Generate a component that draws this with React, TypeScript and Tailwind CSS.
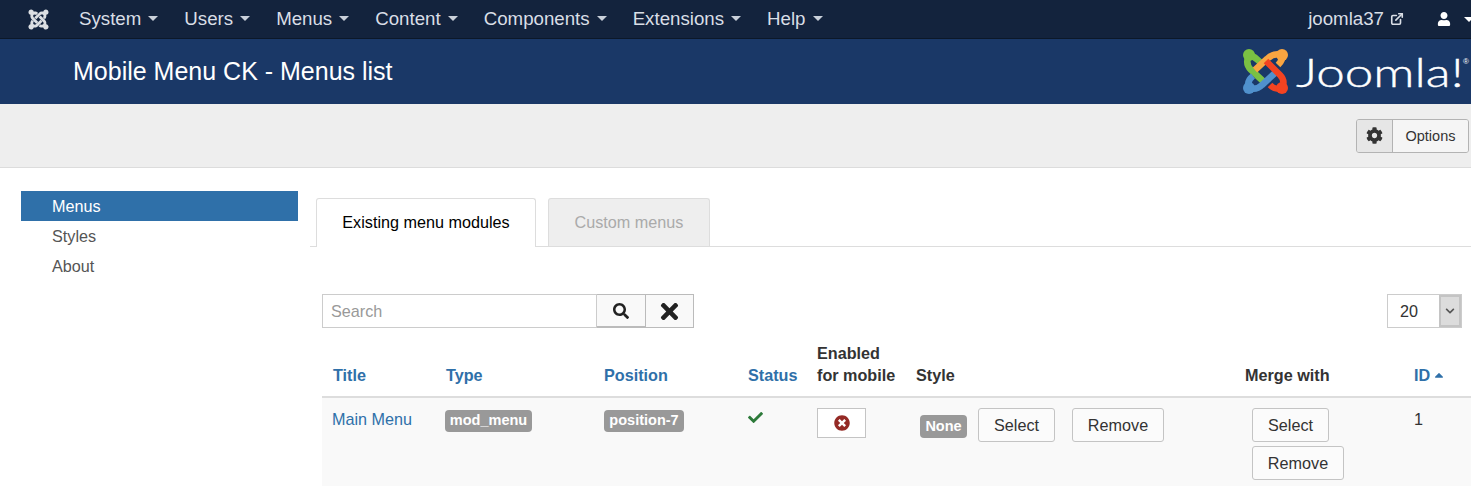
import { FaCheck, FaCog, FaJoomla, FaSearch, FaTimes, FaTimesCircle, FaUser } from "react-icons/fa";
import { FaCaretUp, FaChevronDown } from "react-icons/fa";
import { LuExternalLink } from "react-icons/lu";

const navItems = ["System", "Users", "Menus", "Content", "Components", "Extensions", "Help"];
const sideItems = ["Menus", "Styles", "About"];

function Caret() {
  return <span className="ml-[7px] inline-block h-0 w-0 border-x-[5px] border-t-[5px] border-x-transparent border-t-[#c9d0da] align-middle" />;
}

function JoomlaMark() {
  return (
    <svg viewBox="0 0 46 46" className="h-[46px] w-[46px]" fill="none" strokeWidth="6.5">
      <path d="M17 13 C13 9 11 7 6 6 C3 12 4 17 8 21 L21 33" stroke="#7ac143" />
      <circle cx="6" cy="6" r="6" fill="#7ac143" />
      <path d="M39 6 C32 4 28 6 24 10 L12 21" stroke="#f9a541" />
      <path d="M39 6 C40 10 38 13 35 16" stroke="#f9a541" />
      <circle cx="39" cy="6" r="6" fill="#f9a541" />
      <path d="M6 39 C12 41 16 39 19 36 L33 23" stroke="#5091cd" />
      <path d="M6 39 C4 34 6 30 10 27" stroke="#5091cd" />
      <circle cx="6" cy="39" r="6" fill="#5091cd" />
      <path d="M39 39 C42 33 40 29 37 26 L23 12" stroke="#f44321" />
      <path d="M39 39 C34 41 31 40 27 36" stroke="#f44321" />
      <circle cx="39" cy="39" r="6" fill="#f44321" />
    </svg>
  );
}

function Badge({ children, className }: { children: string; className: string }) {
  return (
    <span className={`inline-flex items-center justify-center rounded-[4px] bg-[#999] text-[14.5px] font-bold text-white ${className}`}>
      {children}
    </span>
  );
}

function Btn({ children, className }: { children: string; className: string }) {
  return (
    <button className={`h-[34px] rounded-[3px] border border-[#c4c4c4] bg-[#fbfbfb] text-[16.2px] text-[#333] ${className}`}>
      {children}
    </button>
  );
}

export default function App() {
  return (
    <div className="h-[486px] w-[1471px] overflow-hidden bg-white font-['Liberation_Sans',sans-serif] text-[16.2px] text-[#333]">
      <nav className="flex h-[39px] items-center border-b border-[#0c1829] bg-[#13233d] text-[18.7px] text-[#d9dee6]">
        <FaJoomla className="ml-[27px] mr-[29px] h-[23px] w-[23px] text-[#dcdfe3]" />
        <div className="flex gap-[26px]">
          {navItems.map((item) => (
            <span key={item} className="flex items-center">
              {item}
              <Caret />
            </span>
          ))}
        </div>
        <span className="ml-auto flex items-center">
          joomla37
          <LuExternalLink className="ml-[6px] h-[14px] w-[14px]" strokeWidth={2.8} />
        </span>
        <FaUser className="ml-[33px] h-[14px] w-[14px] text-white" />
        <span className="ml-[13px] mr-[-3px] h-0 w-0 border-x-[5px] border-t-[5px] border-x-transparent border-t-white" />
      </nav>

      <header className="flex h-[65px] items-center justify-between bg-[#1a3867] pl-[73px] text-white">
        <h1 className="text-[25px]">Mobile Menu CK - Menus list</h1>
        <div className="flex items-center pr-[2px]">
          <JoomlaMark />
          <span className="ml-[7px] w-[167px] origin-left scale-x-[1.28] font-['Lato',sans-serif] text-[40px] font-light leading-none [-webkit-text-stroke:0.4px_white]">Joomla!</span>
          <span className="mb-[20px] text-[8px]">®</span>
        </div>
      </header>

      <div className="flex h-[64px] items-center justify-end border-b border-[#dcdcdc] bg-[#eee] pr-[2px]">
        <div className="flex h-[34px] overflow-hidden rounded-[3px] border border-[#b3b3b3] text-[14.5px]">
          <span className="flex w-[36px] items-center justify-center border-r border-[#b3b3b3] bg-[#e6e6e6]">
            <FaCog className="h-[17px] w-[17px] text-[#333]" />
          </span>
          <span className="flex w-[75px] items-center justify-center bg-[#f5f5f5] pt-[2px]">Options</span>
        </div>
      </div>

      <div className="flex">
        <aside className="ml-[21px] mt-[23px] w-[277px]">
          {sideItems.map((item, i) => (
            <div key={item} className={`flex h-[30px] items-center pl-[31px] ${i === 0 ? "bg-[#2f70a9] text-white" : "text-[#555]"}`}>
              {item}
            </div>
          ))}
        </aside>

        <main className="ml-[12px] flex-1">
          <div className="mt-[30px] flex h-[49px] gap-[12px] border-b border-[#ddd] pl-[6px]">
            <div className="flex h-[49px] w-[220px] items-center justify-center rounded-t-[3px] border border-b-0 border-[#ddd] bg-white pb-[2px] text-black">
              Existing menu modules
            </div>
            <div className="flex h-[48px] w-[162px] items-center justify-center rounded-t-[3px] border border-b-0 border-[#ddd] bg-[#eee] pb-[1px] text-[#aaa]">
              Custom menus
            </div>
          </div>

          <div className="ml-[12px] mt-[47px] flex h-[34px] items-stretch justify-between pr-[9px]">
            <div className="flex">
              <div className="flex w-[275px] items-center border border-[#ccc] bg-white pl-[8px] text-[#999]">Search</div>
              <span className="flex w-[49px] items-center justify-center border border-b-2 border-l-0 border-[#bbb] bg-[#f9f9f9]">
                <FaSearch className="h-[16px] w-[16px] text-[#222]" />
              </span>
              <span className="flex w-[48px] items-center justify-center border border-l-0 border-[#bbb] bg-[#f9f9f9]">
                <FaTimes className="h-[25px] w-[25px] text-[#222]" />
              </span>
            </div>
            <div className="flex w-[75px] border border-[#ccc]">
              <span className="flex flex-1 items-center pl-[12px]">20</span>
              <span className="flex w-[22px] items-center justify-center border-2 border-[#c4c4c4] bg-[#dcdcdc]">
                <FaChevronDown className="h-[10px] w-[10px] text-[#555]" />
              </span>
            </div>
          </div>

          <table className="ml-[12px] mt-[14px] w-[1149px] table-fixed border-collapse">
            <colgroup>
              <col className="w-[114px]" />
              <col className="w-[158px]" />
              <col className="w-[144px]" />
              <col className="w-[69px]" />
              <col className="w-[99px]" />
              <col className="w-[329px]" />
              <col className="w-[169px]" />
              <col className="w-[67px]" />
            </colgroup>
            <thead>
              <tr className="border-b-2 border-[#ddd] text-left align-bottom font-bold leading-[22px]">
                <th className="pb-[10px] pl-[11px] text-[#2f70a9]">Title</th>
                <th className="pb-[10px] pl-[10px] text-[#2f70a9]">Type</th>
                <th className="pb-[10px] pl-[10px] text-[#2f70a9]">Position</th>
                <th className="pb-[10px] pl-[10px] text-[#2f70a9]">Status</th>
                <th className="pb-[10px] pl-[10px]">Enabled<br />for mobile</th>
                <th className="pb-[10px] pl-[10px]">Style</th>
                <th className="pb-[10px] pl-[10px]">Merge with</th>
                <th className="pb-[10px] pl-[10px] text-[#2f70a9]">
                  ID
                  <FaCaretUp className="mb-[3px] ml-[2px] inline h-[14px] w-[14px]" />
                </th>
              </tr>
            </thead>
            <tbody>
              <tr className="h-[90px] bg-[#f9f9f9] align-top">
                <td className="pl-[10px] pt-[9px] text-[#2f70a9]">Main Menu</td>
                <td className="pl-[9px] pt-[9px]">
                  <Badge className="h-[22px] w-[87px]">mod_menu</Badge>
                </td>
                <td className="pl-[10px] pt-[9px]">
                  <Badge className="h-[22px] w-[80px]">position-7</Badge>
                </td>
                <td className="pl-[9px] pt-[12px]">
                  <FaCheck className="h-[15px] w-[17px] text-[#2d7a3a]" />
                </td>
                <td className="pl-[10px] pt-[10px]">
                  <span className="flex h-[30px] w-[49px] items-center justify-center border border-[#c4c4c4] bg-white">
                    <FaTimesCircle className="h-[16px] w-[16px] text-[#942a25]" />
                  </span>
                </td>
                <td className="pl-[14px] pt-[10px]">
                  <div className="flex items-start">
                    <Badge className="mt-[7px] h-[23px] w-[47px]">None</Badge>
                    <Btn className="ml-[11px] w-[77px]">Select</Btn>
                    <Btn className="ml-[17px] w-[92px]">Remove</Btn>
                  </div>
                </td>
                <td className="pl-[17px] pt-[10px]">
                  <div className="flex flex-col items-start gap-[4px]">
                    <Btn className="w-[77px]">Select</Btn>
                    <Btn className="w-[92px]">Remove</Btn>
                  </div>
                </td>
                <td className="pl-[10px] pt-[9px]">1</td>
              </tr>
            </tbody>
          </table>
        </main>
      </div>
    </div>
  );
}
